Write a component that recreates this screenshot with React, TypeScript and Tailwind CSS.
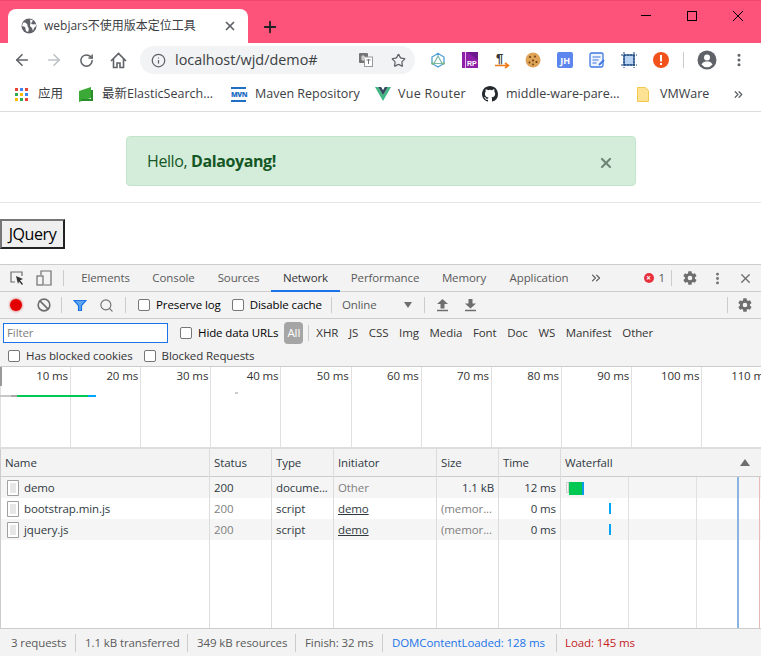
import { ArrowLeft, ArrowRight, RotateCw, Info, Star, X, Plus, ChevronsRight, MoreVertical, Search, Ban } from "lucide-react"

const font = { fontFamily: '"Open Sans", "Noto Sans CJK SC", sans-serif' }

const panelTabs = [
  { name: "Elements", width: "w-[71px]" },
  { name: "Console", width: "w-[65px]" },
  { name: "Sources", width: "w-[65px]" },
  { name: "Network", width: "w-[69px]" },
  { name: "Performance", width: "w-[90px]" },
  { name: "Memory", width: "w-[68px]" },
  { name: "Application", width: "w-[82px]" },
]
const filterTypes = ["XHR", "JS", "CSS", "Img", "Media", "Font", "Doc", "WS", "Manifest", "Other"]
const overviewTicks = ["10 ms", "20 ms", "30 ms", "40 ms", "50 ms", "60 ms", "70 ms", "80 ms", "90 ms", "100 ms", "110 ms"]
const rowBg = ["bg-[#f5f5f5]", "bg-white", "bg-[#f5f5f5]"]

const columns = [
  { title: "Status", width: "w-[62px]", cells: ["200", "200", "200"] },
  { title: "Type", width: "w-[62px]", cells: ["docume...", "script", "script"] },
  { title: "Initiator", width: "w-[103px]", cells: ["Other", "demo", "demo"] },
  { title: "Size", width: "w-[62px]", cells: ["1.1 kB", "(memor...", "(memor..."] },
  { title: "Time", width: "w-[62px]", cells: ["12 ms", "0 ms", "0 ms"] },
]

function Cell({ col, text, i }: { col: string; text: string; i: number }) {
  let color = "text-[#303942]"
  if (col === "Status" && i > 0) color = "text-[#808080]"
  if (col === "Initiator" && i === 0) color = "text-[#808080]"
  if (col === "Size" && i > 0) color = "text-[#808080]"
  const right = (col === "Size" && i === 0) || col === "Time"
  return (
    <div className={`h-[21px] px-1 flex items-center whitespace-nowrap overflow-hidden ${rowBg[i]} ${color} ${right ? "justify-end" : ""} ${col === "Initiator" && i > 0 ? "underline" : ""}`}>
      {text}
    </div>
  )
}

function DocIcon() {
  return (
    <svg width="12" height="16" viewBox="0 0 12 16" className="shrink-0">
      <path d="M.5.5h11v15H.5z" fill="#fff" stroke="#a0a0a0" />
      <path d="M3 4h6M3 6h6M3 8h6M3 10h6M3 12h6" stroke="#cfcfcf" />
    </svg>
  )
}

function Check({ label }: { label: string }) {
  return (
    <label className="flex items-center gap-[6px] whitespace-nowrap">
      <span className="w-[12px] h-[12px] rounded-[2px] border border-[#767676] bg-white" />
      <span>{label}</span>
    </label>
  )
}

function Gear({ size = 16, color = "#6e6e6e" }: { size?: number; color?: string }) {
  return (
    <svg width={size} height={size} viewBox="0 0 24 24">
      <path
        fill={color}
        fillRule="evenodd"
        d="M19.4 13c.04-.33.06-.66.06-1s-.02-.67-.06-1l2.1-1.65a.5.5 0 0 0 .12-.64l-2-3.46a.5.5 0 0 0-.61-.22l-2.49 1a7.3 7.3 0 0 0-1.73-1l-.38-2.65A.49.49 0 0 0 13.9 2h-4a.49.49 0 0 0-.49.42l-.38 2.65c-.62.26-1.2.6-1.73 1l-2.49-1a.5.5 0 0 0-.61.22l-2 3.46a.5.5 0 0 0 .12.64L4.44 11a7.9 7.9 0 0 0 0 2l-2.11 1.65a.5.5 0 0 0-.12.64l2 3.46c.12.22.38.3.61.22l2.49-1c.53.4 1.11.74 1.73 1l.38 2.65c.04.24.25.42.49.42h4c.24 0 .45-.18.49-.42l.38-2.65c.62-.26 1.2-.6 1.73-1l2.49 1c.23.08.49 0 .61-.22l2-3.46a.5.5 0 0 0-.12-.64L19.4 13zM12 15.5a3.5 3.5 0 1 1 0-7 3.5 3.5 0 0 1 0 7z"
      />
    </svg>
  )
}

// solid arrow sitting on a bar, the HAR import/export buttons
function HarArrow({ down }: { down?: boolean }) {
  return (
    <svg width="13" height="13" viewBox="0 0 13 13" className="shrink-0">
      {down ? <path d="M4.500 0h4v4.500H12l-5.500 5-5.500-5h3.500z" fill="#6e6e6e" /> : <path d="M6.500 0 12 5H8.500v4.500h-4V5H1z" fill="#6e6e6e" />}
      <path d="M1 11.500h11" stroke="#6e6e6e" strokeWidth="1.500" />
    </svg>
  )
}

function Divider() {
  return <div className="w-px h-[16px] bg-[#ccc] shrink-0" />
}

function Extensions() {
  return (
    <div className="flex items-center gap-[15.8px] ml-[15px]">
      <svg width="16" height="16" viewBox="0 0 16 16">
        <path d="M8 1.500 14 5v6.500L8 15 2 11.500V5z" fill="none" stroke="#4f9fd6" strokeWidth="1.300" />
        <path d="M8 4 12 11.500H4z" fill="none" stroke="#7fb8a4" strokeWidth="1.200" />
        <circle cx="2.500" cy="11.500" r="1.300" fill="#7cb87c" />
        <circle cx="13.500" cy="11.500" r="1.300" fill="#7cb87c" />
        <circle cx="8" cy="2" r="1.300" fill="#4f9fd6" />
      </svg>
      <svg width="16" height="16" viewBox="0 0 16 16">
        <rect width="16" height="16" fill="#8e1fa8" />
        <path d="M3 0h1v16H3z" fill="#e6b8ef" />
        <path d="M5 0h11v8z" fill="#6a1a8c" />
        <text x="5" y="14" fontSize="7" fontWeight="700" fill="#fff" fontFamily="Liberation Sans, sans-serif">RP</text>
      </svg>
      <svg width="16" height="18" viewBox="0 0 16 18" className="overflow-visible">
        <text x="2" y="12" fontSize="13" fontWeight="700" fill="#333" fontFamily="Liberation Sans, sans-serif">¶</text>
        <path d="M1 14.500h12M11 12l3.500 2.500L11 17" fill="none" stroke="#ef7d1a" strokeWidth="1.600" />
      </svg>
      <svg width="16" height="16" viewBox="0 0 16 16">
        <circle cx="8" cy="8" r="7.500" fill="#e0a458" />
        <circle cx="5" cy="5" r="1.100" fill="#6b3e16" />
        <circle cx="10" cy="4.500" r="1" fill="#6b3e16" />
        <circle cx="8" cy="8.500" r="1.100" fill="#6b3e16" />
        <circle cx="4.500" cy="10.500" r="1" fill="#6b3e16" />
        <circle cx="11.500" cy="10" r="1.100" fill="#6b3e16" />
        <circle cx="8" cy="12.500" r="0.900" fill="#6b3e16" />
      </svg>
      <div className="w-[16px] h-[16px] rounded-[2px] bg-[#5c85ee] text-white text-[9px] font-bold flex items-center justify-center leading-none">JH</div>
      <svg width="16" height="16" viewBox="0 0 16 16">
        <rect x="1" y="1" width="13" height="14" rx="1.500" fill="#eef3fd" stroke="#3f78e0" strokeWidth="1.300" />
        <path d="M3.500 5h8M3.500 8h6M3.500 11h4" stroke="#3f78e0" strokeWidth="1.200" />
        <path d="M10 13l5-5" stroke="#3f78e0" strokeWidth="1.800" />
      </svg>
      <svg width="16" height="16" viewBox="0 0 16 16">
        <rect x="3" y="3" width="10" height="10" fill="#b9d3f0" stroke="#15457f" strokeWidth="1.200" />
        <path d="M3 0v16M13 0v16M0 3h16M0 13h16" stroke="#15457f" strokeWidth="1" strokeDasharray="2 1" />
      </svg>
      <svg width="16" height="16" viewBox="0 0 16 16">
        <circle cx="8" cy="8" r="8" fill="#f1511b" />
        <rect x="7" y="3" width="2" height="6.500" fill="#fff" />
        <rect x="7" y="11" width="2" height="2" fill="#fff" />
      </svg>
    </div>
  )
}

function Bookmarks() {
  return (
    <div className="h-[34px] flex items-center text-[12.5px] text-[#3c4043] border-b border-[#dadce0] box-content">
      <div className="flex items-center pl-[15px] w-[79px] gap-[10px]">
        <div className="grid grid-cols-3 gap-[2px] w-[13px] shrink-0">
          {["bg-[#ea4335]", "bg-[#4285f4]", "bg-[#ea4335]", "bg-[#34a853]", "bg-[#fbbc05]", "bg-[#4285f4]", "bg-[#fbbc05]", "bg-[#34a853]", "bg-[#ea4335]"].map((c, i) => (
            <span key={i} className={`w-[3px] h-[3px] ${c}`} />
          ))}
        </div>
        <span className="whitespace-nowrap">应用</span>
      </div>
      <div className="flex items-center gap-[9px] w-[152px]">
        <svg width="14" height="15" viewBox="0 0 14 15" className="shrink-0">
          <path d="M0 4 12 0v11L0 15z" fill="#3aa935" />
          <path d="M2 14h12V3h-2v9H2z" fill="#2b8c2b" />
        </svg>
        <span className="whitespace-nowrap">最新ElasticSearch...</span>
      </div>
      <div className="flex items-center gap-[9px] w-[144px]">
        <div className="w-[15px] h-[15px] shrink-0 flex flex-col justify-between">
          <span className="h-[2px] bg-[#1f6fc4]" />
          <span className="text-[7px] font-extrabold text-[#1f6fc4] leading-none text-center tracking-[-0.4px]">MVN</span>
          <span className="h-[2px] bg-[#1f6fc4]" />
        </div>
        <span className="whitespace-nowrap">Maven Repository</span>
      </div>
      <div className="flex items-center gap-[7px] w-[107px]">
        <svg width="16" height="14" viewBox="0 0 16 14" className="shrink-0">
          <path d="M0 0h3.200L8 8.200 12.800 0H16L8 14z" fill="#41b883" />
          <path d="M3.200 0h3L8 3.200 9.800 0h3L8 8.200z" fill="#35495e" />
        </svg>
        <span className="whitespace-nowrap tracking-[0.3px]">Vue Router</span>
      </div>
      <div className="flex items-center gap-[8px] w-[155px]">
        <svg width="16" height="16" viewBox="0 0 16 16" className="shrink-0">
          <path
            fill="#24292e"
            d="M8 0C3.58 0 0 3.58 0 8c0 3.54 2.29 6.53 5.47 7.59.4.07.55-.17.55-.38 0-.19-.01-.82-.01-1.49-2.01.37-2.53-.49-2.69-.94-.09-.23-.48-.94-.82-1.13-.28-.15-.68-.52-.01-.53.63-.01 1.08.58 1.23.82.72 1.21 1.87.87 2.33.66.07-.52.28-.87.51-1.07-1.78-.2-3.64-.89-3.64-3.95 0-.87.31-1.59.82-2.15-.08-.2-.36-1.02.08-2.12 0 0 .67-.21 2.2.82a7.5 7.5 0 0 1 4 0c1.53-1.04 2.2-.82 2.2-.82.44 1.1.16 1.92.08 2.12.51.56.82 1.27.82 2.15 0 3.07-1.87 3.75-3.65 3.95.29.25.54.73.54 1.48 0 1.07-.01 1.93-.01 2.2 0 .21.15.46.55.38A8.01 8.01 0 0 0 16 8c0-4.42-3.58-8-8-8z"
          />
        </svg>
        <span className="whitespace-nowrap">middle-ware-pare...</span>
      </div>
      <div className="flex items-center gap-[11px] w-[95px]">
        <svg width="12" height="15" viewBox="0 0 12 15" className="shrink-0">
          <path d="M.5.5h8l3 3v11H.5z" fill="#fde293" stroke="#f2c94c" />
        </svg>
        <span className="whitespace-nowrap">VMWare</span>
      </div>
      <ChevronsRight size={13} strokeWidth={2.400} className="text-[#5f6368]" />
    </div>
  )
}

function Browser() {
  return (
    <div>
      <div className="h-[43px] bg-[#fd5279] border-t border-[#f0476f] flex items-end relative">
        <div className="ml-[8px] w-[240px] h-[34px] bg-white rounded-t-[8px] flex items-center pl-[13px] pr-[11px] text-[12px] text-[#3c4043]">
          <svg width="16" height="16" viewBox="0 0 16 16" className="shrink-0">
            <circle cx="8" cy="8" r="7.500" fill="#5f6368" />
            <path d="M2 5c2-1 3 0 4 1s0 2 1 3 1 3 0 5l-2-1-1-4-3-1zM9 1.500l3 1-2 3 2 1 2.500-.5L15 8l-2 2-1 3-1-3-2-2 .5-3z" fill="#fff" />
          </svg>
          <span className="ml-[7px] whitespace-nowrap flex-1">webjars不使用版本定位工具</span>
          <X size={14} strokeWidth={3} className="text-[#5f6368]" />
        </div>
        <Plus size={18} strokeWidth={2.400} className="ml-[13px] mb-[7px] text-[#202124]" />
        <div className="absolute right-0 top-0 flex items-center">
          <span className="w-[46px] h-[29px] flex items-center justify-center"><span className="w-[10px] h-px bg-black" /></span>
          <span className="w-[46px] h-[29px] flex items-center justify-center"><span className="w-[10px] h-[10px] border border-black" /></span>
          <span className="w-[46px] h-[29px] flex items-center justify-center">
            <svg width="10" height="10" viewBox="0 0 10 10"><path d="M0 0l10 10M10 0 0 10" stroke="#000" /></svg>
          </span>
        </div>
      </div>
      <div className="h-[34px] flex items-center">
        <ArrowLeft size={18} strokeWidth={2.200} className="ml-[13px] text-[#5f6368]" />
        <ArrowRight size={18} strokeWidth={2.200} className="ml-[14px] text-[#bdc1c6]" />
        <RotateCw size={15} strokeWidth={2.400} className="ml-[16px] text-[#5f6368]" />
        <svg width="17" height="17" viewBox="0 0 17 17" className="ml-[16px] shrink-0">
          <path d="M1 9 8.500 1.500 16 9M3.500 7v8.500h3.500V11h3v4.500h3.500V7" fill="none" stroke="#5f6368" strokeWidth="1.600" />
        </svg>
        <div className="ml-[13px] w-[275px] h-[28px] rounded-full bg-[#f1f3f4] flex items-center pl-[11px] pr-[9px]">
          <Info size={15} strokeWidth={2} className="text-[#5f6368]" />
          <span className="ml-[9px] text-[14.4px] text-[#3c4043] flex-1 whitespace-nowrap">localhost/wjd/demo#</span>
          <svg width="14" height="14" viewBox="0 0 14 14" className="mr-[18px] shrink-0">
            <rect width="9" height="10" rx="1" fill="#757575" />
            <rect x="5.500" y="4" width="8" height="9.500" fill="#fff" stroke="#9a9a9a" />
            <path d="M7.500 7h4M9.500 6v5" stroke="#757575" />
            <path d="M3 5h3M3 3h2v4H3z" fill="none" stroke="#fff" strokeWidth="0.800" />
          </svg>
          <Star size={15} strokeWidth={2} className="text-[#5f6368]" />
        </div>
        <Extensions />
        <div className="ml-[14px] w-px h-[16px] bg-[#ccc]" />
        <svg width="20" height="20" viewBox="0 0 20 20" className="ml-[13px] shrink-0">
          <circle cx="10" cy="10" r="9.500" fill="#5f6368" />
          <circle cx="10" cy="7.500" r="3" fill="#fff" />
          <path d="M4.500 14.500c1-2.500 3.500-3 5.500-3s4.500.5 5.500 3a7 7 0 0 1-11 0z" fill="#fff" />
        </svg>
        <MoreVertical size={16} strokeWidth={2.600} className="ml-[14px] text-[#5f6368]" />
      </div>
      <Bookmarks />
    </div>
  )
}

function PageContent() {
  return (
    <div className="h-[152px] bg-white">
      <div className="pt-[24px] h-[91px] border-b border-[#e5e5e5]">
        <div className="ml-[126px] w-[510px] h-[50px] rounded-[4px] bg-[#d4edda] border border-[#c3e6cb] flex items-center justify-between pl-[20px] pr-[21px] text-[#155724] text-[16px]" style={{ fontFamily: '"Open Sans", sans-serif' }}>
          <span className="tracking-[-0.4px]">Hello, <b>Dalaoyang!</b></span>
          <X size={16} strokeWidth={3.200} className="mt-[4px] text-[#6f8577]" />
        </div>
      </div>
      <button type="button" className="mt-[16px] block w-[65px] h-[30px] bg-[#efefef] border-2 border-t-[#767676] border-l-[#767676] border-r-[#222] border-b-[#222] text-[16px] text-black tracking-[-0.4px]">
        JQuery
      </button>
    </div>
  )
}

function Toolbars() {
  return (
    <>
      <div className="h-[28px] border-t border-[#ccc] border-b flex items-center">
        <svg width="14" height="14" viewBox="0 0 14 14" className="ml-[10px] shrink-0">
          <path d="M12 5V1H1v10h4" fill="none" stroke="#6e6e6e" strokeWidth="1.200" />
          <path d="M6 5l7 3-3 1.200L13 13l-1 1-3-3.500L8 13z" fill="#333" />
        </svg>
        <svg width="16" height="16" viewBox="0 0 16 16" className="ml-[12px] shrink-0">
          <path d="M5 5V1h10v14H8" fill="none" stroke="#6e6e6e" strokeWidth="1.200" />
          <rect x="1" y="6" width="6" height="9" fill="none" stroke="#6e6e6e" strokeWidth="1.200" />
        </svg>
        <div className="ml-[11px] mr-[6px]"><Divider /></div>
        {panelTabs.map((t) => (
          <div key={t.name} className={`${t.width} h-[27px] shrink-0 flex items-center justify-center whitespace-nowrap ${t.name === "Network" ? "text-[#333] border-b-2 border-[#1a73e8] mb-[-1px]" : "text-[#5a5a5a]"}`}>
            {t.name}
          </div>
        ))}
        <ChevronsRight size={14} className="ml-[9px] text-[#5a5a5a]" />
        <div className="ml-auto flex items-center">
          <span className="w-[10px] h-[10px] rounded-full bg-[#e8313d] text-white text-[8px] leading-[10px] text-center font-bold">×</span>
          <span className="ml-[5px] text-[#5a5a5a]">1</span>
          <div className="ml-[6px]"><Divider /></div>
          <div className="ml-[10px]"><Gear /></div>
          <MoreVertical size={15} strokeWidth={2.600} className="ml-[12px] text-[#6e6e6e]" />
          <X size={15} strokeWidth={2.200} className="ml-[13px] mr-[8px] text-[#6e6e6e]" />
        </div>
      </div>
      <div className="h-[27px] border-b border-[#ccc] flex items-center">
        <span className="ml-[10px] w-[12px] h-[12px] rounded-full bg-[#e30000] shadow-[0_0_2px_1px_#e9a0a0]" />
        <Ban size={14} strokeWidth={2.800} className="ml-[15px] text-[#6e6e6e]" />
        <div className="ml-[10px]"><Divider /></div>
        <svg width="14" height="13" viewBox="0 0 14 13" className="ml-[11px] shrink-0">
          <path d="M1 1.500h12L8.500 6.500v5h-3v-5z" fill="#5ea6e8" stroke="#1a73e8" strokeWidth="1.200" />
        </svg>
        <Search size={15} strokeWidth={1.800} className="ml-[12px] text-[#6e6e6e]" />
        <div className="ml-[11px]"><Divider /></div>
        <div className="ml-[12px]"><Check label="Preserve log" /></div>
        <div className="ml-[11px]"><Check label="Disable cache" /></div>
        <div className="ml-[9px]"><Divider /></div>
        <span className="ml-[10px] text-[#5a5a5a]">Online</span>
        <span className="ml-[27px] w-0 h-0 border-x-[4px] border-x-transparent border-t-[6px] border-t-[#6e6e6e]" />
        <div className="ml-[12px]"><Divider /></div>
        <div className="ml-[11px]"><HarArrow /></div>
        <div className="ml-[15px]"><HarArrow down /></div>
        <div className="ml-auto flex items-center">
          <Divider />
          <div className="ml-[9px] mr-[8px]"><Gear /></div>
        </div>
      </div>
      <div className="h-[48px] border-b border-[#ccc]">
        <div className="h-[27px] flex items-center">
          <div className="ml-[3px] w-[165px] h-[20px] bg-white border border-[#1a73e8] px-[3px] flex items-center text-[#808080]">Filter</div>
          <div className="ml-[12px]"><Check label="Hide data URLs" /></div>
          <span className="ml-[6px] w-[19px] h-[22px] rounded-[4px] bg-[#a5a5a5] text-white flex items-center justify-center">All</span>
          <div className="ml-[5px]"><Divider /></div>
          <div className="ml-[7px] flex items-center gap-[10.7px]">
            {filterTypes.map((f) => (
              <span key={f} className="text-[#333] whitespace-nowrap">{f}</span>
            ))}
          </div>
        </div>
        <div className="h-[20px] pl-[8px] gap-[11px] flex items-center text-[#333]">
          <Check label="Has blocked cookies" />
          <Check label="Blocked Requests" />
        </div>
      </div>
    </>
  )
}

function Overview() {
  return (
    <div className="h-[82px] bg-white border-b-2 border-[#ddd] flex relative overflow-hidden box-border">
      {overviewTicks.map((t, i) => (
        <div key={t} className={`shrink-0 border-r border-[#e0e0e0] text-right pr-[2px] pt-[3px] text-[#333] whitespace-nowrap ${i === 0 ? "w-[71px] border-l" : "w-[70.15px]"}`}>
          {t}
        </div>
      ))}
      <span className="absolute left-0 top-0 w-[2px] h-[19px] bg-[#999]" />
      <span className="absolute left-0 top-[28px] w-[11px] h-[2px] bg-[#c8c8c8]" />
      <span className="absolute left-[11px] top-[28px] w-[6px] h-[2px] bg-[#a8a8a8]" />
      <span className="absolute left-[17px] top-[28px] w-[71px] h-[2px] bg-[#00c853]" />
      <span className="absolute left-[88px] top-[28px] w-[8px] h-[2px] bg-[#00a6f5]" />
      <span className="absolute left-[235px] top-[25px] w-[3px] h-[2px] bg-[#ccc]" />
    </div>
  )
}

function WaterfallColumn() {
  return (
    <div className="flex-1 flex flex-col relative">
      <div className="h-[28px] bg-[#f3f3f3] border-b border-[#ccc] flex items-center justify-between pl-[4px] pr-[11px] text-[#303942]">
        Waterfall
        <span className="w-0 h-0 border-x-[5px] border-x-transparent border-b-[7px] border-b-[#6e6e6e]" />
      </div>
      {rowBg.map((bg, i) => (
        <div key={i} className={`h-[21px] ${bg}`} />
      ))}
      <span className="absolute left-[67px] top-[28px] bottom-0 w-px bg-[#e0e0e0]" />
      <span className="absolute left-[135px] top-[28px] bottom-0 w-px bg-[#e0e0e0]" />
      <span className="absolute left-[176px] top-[28px] bottom-0 w-[2px] bg-[#8ab4e0]" />
      <span className="absolute right-[1px] top-[28px] bottom-0 w-px bg-[#e6b8b8]" />
      <span className="absolute left-[5px] top-[33px] w-[3px] h-[11px] border border-[#d0d0d0]" />
      <span className="absolute left-[8px] top-[33px] w-[14px] h-[13px] bg-[#00c853]" />
      <span className="absolute left-[21px] top-[33px] w-[2px] h-[13px] bg-[#0a9ae8]" />
      <span className="absolute left-[48px] top-[54px] w-[2px] h-[11px] bg-[#00a6f5]" />
      <span className="absolute left-[48px] top-[75px] w-[2px] h-[11px] bg-[#00a6f5]" />
    </div>
  )
}

function NetworkTable() {
  const names = ["demo", "bootstrap.min.js", "jquery.js"]
  return (
    <div className="flex-1 flex bg-white min-h-0">
      <div className="w-[210px] shrink-0 border-l border-l-[#ccc] border-r border-r-[#dcdcdc] flex flex-col">
        <div className="h-[28px] bg-[#f3f3f3] border-b border-[#ccc] flex items-center pl-[4px] text-[#303942]">Name</div>
        {names.map((n, i) => (
          <div key={n} className={`h-[21px] pl-[6px] flex items-center gap-[5px] text-[#303942] ${rowBg[i]}`}>
            <DocIcon />
            {n}
          </div>
        ))}
      </div>
      {columns.map((c) => (
        <div key={c.title} className={`${c.width} shrink-0 border-r border-[#dcdcdc] flex flex-col`}>
          <div className="h-[28px] bg-[#f3f3f3] border-b border-[#ccc] flex items-center pl-[4px] text-[#303942]">{c.title}</div>
          {c.cells.map((t, i) => (
            <Cell key={i} col={c.title} text={t} i={i} />
          ))}
        </div>
      ))}
      <WaterfallColumn />
    </div>
  )
}

function StatusBar() {
  const items = [
    { text: "3 requests", width: "w-[76px] pl-[11px]", color: "" },
    { text: "1.1 kB transferred", width: "w-[112px] pl-[9px]", color: "" },
    { text: "349 kB resources", width: "w-[108px] pl-[9px]", color: "" },
    { text: "Finish: 32 ms", width: "w-[87px] pl-[9px]", color: "" },
    { text: "DOMContentLoaded: 128 ms", width: "w-[174px] pl-[9px]", color: "text-[#1a73e8]" },
  ]
  return (
    <div className="h-[28px] bg-[#f3f3f3] border-t border-[#ccc] flex items-center text-[#5a5a5a] whitespace-nowrap">
      {items.map((s) => (
        <div key={s.text} className={`flex items-center shrink-0 border-r border-[#ccc] h-[18px] ${s.width} ${s.color}`}>{s.text}</div>
      ))}
      <div className="flex items-center pl-[8px] h-[18px] text-[#c5221f]">Load: 145 ms</div>
    </div>
  )
}

export default function App() {
  return (
    <div className="w-[761px] h-[656px] overflow-hidden bg-white flex flex-col" style={font}>
      <Browser />
      <PageContent />
      <div className="flex-1 flex flex-col min-h-0 bg-[#f3f3f3] text-[11.5px] leading-none tracking-[-0.1px]">
        <Toolbars />
        <Overview />
        <NetworkTable />
        <StatusBar />
      </div>
    </div>
  )
}
